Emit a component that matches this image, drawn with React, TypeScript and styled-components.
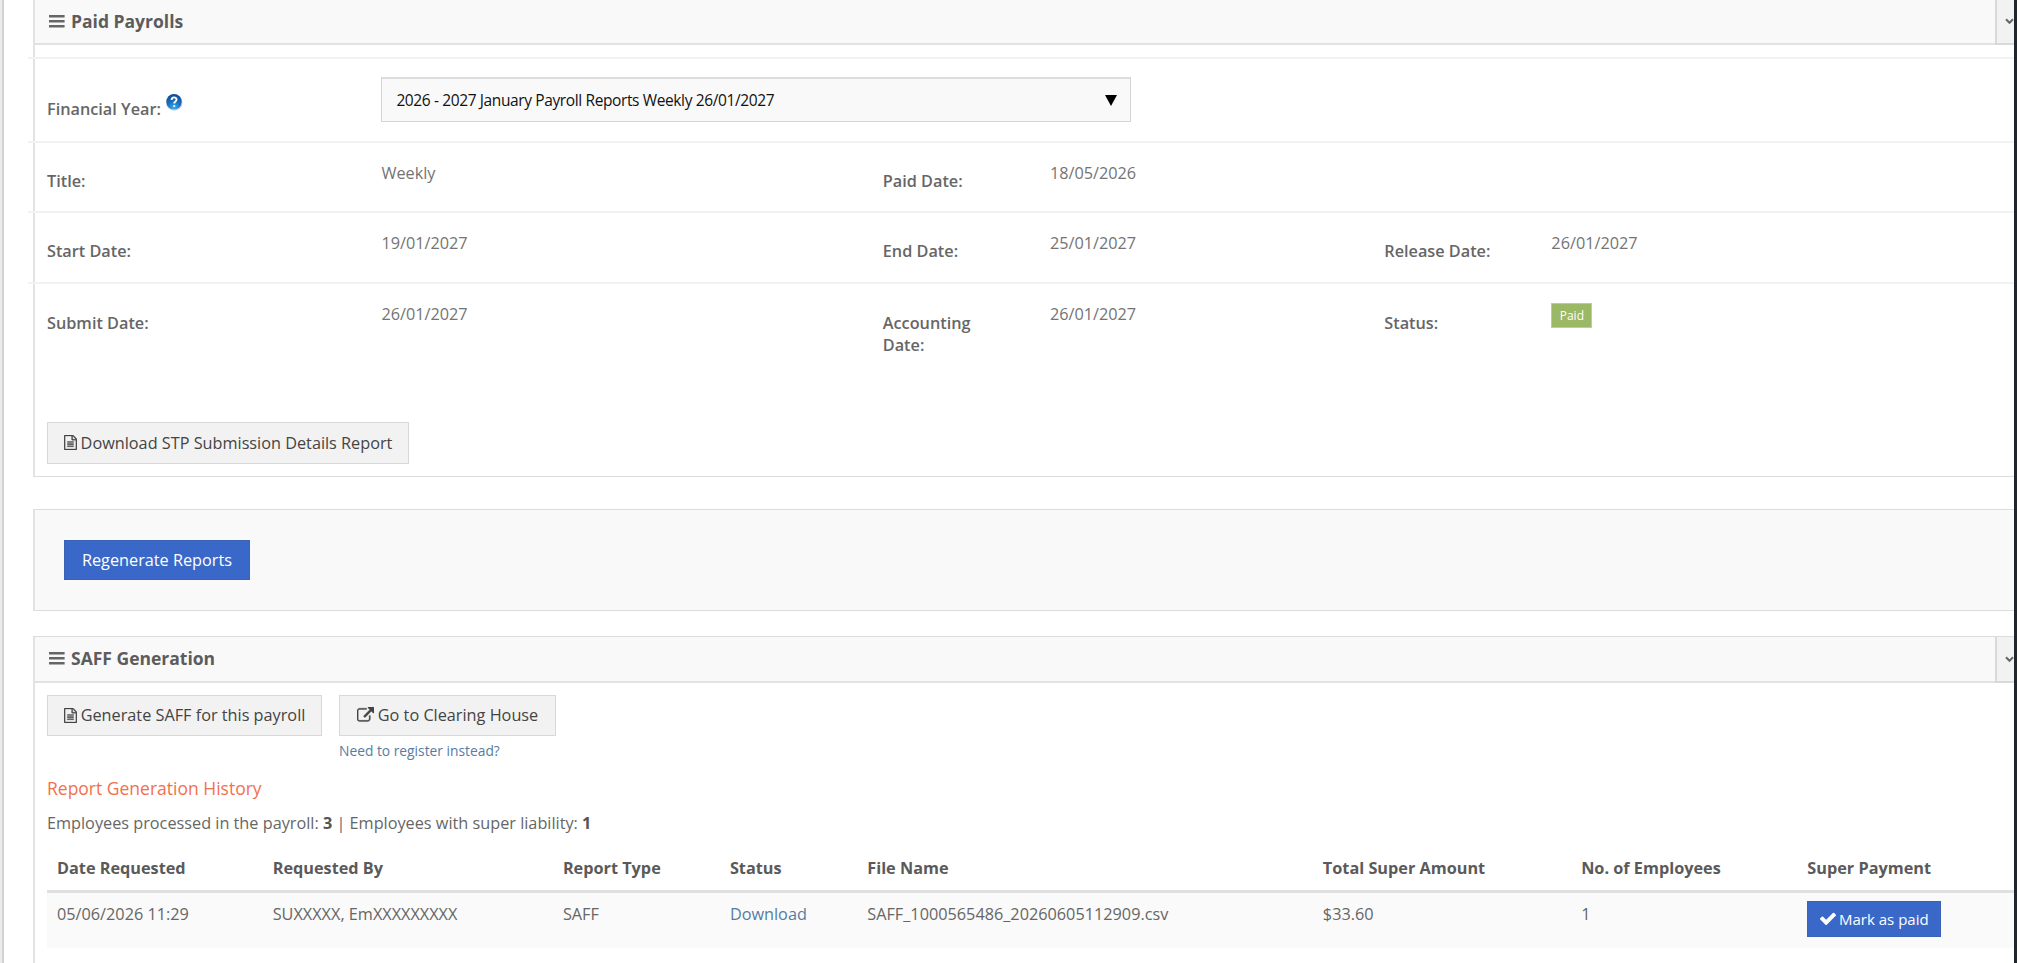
import React from "react";
import styled, { createGlobalStyle, css } from "styled-components";

const GlobalStyle = createGlobalStyle`
  * { box-sizing: border-box; }
  html, body { margin: 0; height: 100%; overflow: hidden; background: #fff; }
  body {
    font-family: "Open Sans", "Liberation Sans", sans-serif;
    font-size: 16.25px;
    line-height: 22px;
    color: #666;
  }
  #root { height: 100%; }
`;

const Screen = styled.div`
  display: flex;
  height: 963px;
  overflow: hidden;
`;

const LeftRail = styled.div`
  flex: none;
  width: 4px;
  background: #ebebeb;
  border-right: 2px solid #d2d2d2;
`;

const RightRail = styled.div`
  flex: none;
  width: 3px;
  background: #20262b;
`;

const Content = styled.main`
  flex: 1;
  min-width: 0;
  padding-left: 29px;
  overflow: hidden;
`;

const Panel = styled.section<{ $h: number; $top?: number; $open?: boolean }>`
  height: ${(p) => p.$h}px;
  margin-top: ${(p) => p.$top ?? 0}px;
  border: 1px solid #dcdcdc;
  border-left: 2px solid #e3e3e3;
  border-right: 0;
  ${(p) => p.$open && css`border-top: 0;`}
`;

const PanelHeader = styled.header<{ $h: number; $gap?: number }>`
  display: flex;
  height: ${(p) => p.$h}px;
  margin-bottom: ${(p) => p.$gap ?? 0}px;
  background: #f9f9f9;
  border-bottom: 2px solid #e2e2e2;
`;

const PanelTitle = styled.h2<{ $pad: number }>`
  flex: 1;
  display: flex;
  gap: 6px;
  margin: 0;
  padding: ${(p) => p.$pad}px 0 0 14px;
  font-size: 17.5px;
  line-height: 22px;
  font-weight: 700;
  color: #5c5c5c;
  svg { margin-top: 5px; }
`;

const Collapse = styled.button`
  width: 19px;
  height: calc(100% + 2px);
  padding: 0;
  border: 0;
  border-left: 2px solid #d9d9d9;
  border-bottom: 2px solid #d9d9d9;
  background: #f2f2f2;
  display: flex;
  align-items: center;
  justify-content: flex-end;
`;

const Row = styled.div<{ $h: number }>`
  display: grid;
  grid-template-columns: 334.4px 501.4px 167.1px 334.4px 167.1px 1fr;
  align-items: start;
  height: ${(p) => p.$h}px;
  margin-left: -7px;
  padding-left: 19px;
  border-top: 2px solid #f2f2f2;
`;

const Label = styled.div<{ $top?: number }>`
  padding: ${(p) => p.$top ?? 27}px 36px 0 0;
  font-weight: 600;
  display: flex;
  gap: 4px;
  svg { flex: none; margin-top: -5px; }
`;

const Value = styled.div`
  padding-top: 19px;
  color: #747474;
`;

const SelectBox = styled.div`
  display: flex;
  align-items: center;
  justify-content: space-between;
  width: 750px;
  height: 45px;
  margin-top: 18px;
  padding: 0 13px 0 14px;
  background: #f9f9f9;
  border: 1px solid #d5d5d5;
  border-top: 2px solid #dcdcdc;
  color: #111;
`;

const SelectText = styled.span`
  font-size: 15.5px;
  letter-spacing: -0.38px;
  white-space: nowrap;
`;

const Badge = styled.span`
  display: block;
  width: 41px;
  height: 25px;
  background: #9ab865;
  border: 1px solid #bccf98;
  color: #fff;
  font-size: 12px;
  line-height: 23px;
  text-align: center;
`;

const Button = styled.button<{ $w: number; $h: number; $primary?: boolean; $size?: number }>`
  display: flex;
  align-items: center;
  justify-content: center;
  gap: 4px;
  width: ${(p) => p.$w}px;
  height: ${(p) => p.$h}px;
  padding: 0 0 1px;
  border: 1px solid ${(p) => (p.$primary ? "#3a62b5" : "#d8d8d8")};
  background: ${(p) => (p.$primary ? "#3a68c8" : "#f2f2f2")};
  color: ${(p) => (p.$primary ? "#fff" : "#444")};
  font: inherit;
  font-size: ${(p) => p.$size ?? 16.25}px;
  white-space: nowrap;
`;

const RowButton = styled(Button)`
  margin-top: -1px;
  gap: 3px;
`;

const Shaded = styled.div`
  height: 100%;
  padding: 30px 0 0 29px;
  background: #f9f9f9;
`;

const StpRow = styled.div`
  padding-left: 12px;
`;

const Body = styled.div`
  padding: 12px 0 0 12px;
`;

const Actions = styled.div`
  display: flex;
  align-items: flex-start;
  gap: 17px;
`;

const Link = styled.a<{ $small?: boolean }>`
  color: #557ca3;
  ${(p) => p.$small && css`display: block; margin-top: 4px; margin-bottom: 1px; font-size: 13.8px; line-height: 22px;`}
`;

const History = styled.h3`
  margin: 13px 0 0;
  font-size: 17.5px;
  line-height: 24px;
  font-weight: 400;
  color: #f2704d;
`;

const Summary = styled.p`
  margin: 12px 0 0;
  b { color: #555; }
`;

const Table = styled.div`
  margin-top: 12px;
`;

const TableRow = styled.div<{ $head?: boolean }>`
  display: grid;
  grid-template-columns: 215.7px 290.2px 167px 137.4px 455.6px 258.3px 226.2px 1fr;
  align-items: start;
  padding-left: 10px;
  ${(p) =>
    p.$head
      ? css`height: 47px; padding-top: 10px; font-weight: 700; color: #5a5a5a; border-bottom: 3px solid #e0e0e0;`
      : css`height: 55px; padding-top: 9px; background: #fafafa;`}
`;

const Cell = styled.div`
  padding-top: 1px;
`;

const Bars = () => (
  <svg width="16" height="13" viewBox="0 0 16 13" fill="#666">
    <rect y="0" width="15.6" height="2.5" />
    <rect y="5" width="15.6" height="2.5" />
    <rect y="10" width="15.6" height="2.5" />
  </svg>
);

const Chevron = () => (
  <svg width="9" height="7" viewBox="0 0 9 7" fill="none" stroke="#666" strokeWidth="2">
    <path d="M1 1.2 4.5 4.8 8 1.2" />
  </svg>
);

const Help = () => (
  <svg width="18" height="18" viewBox="0 0 18 18">
    <defs>
      <radialGradient id="ball" cx="0.5" cy="0.9" r="0.85">
        <stop offset="0" stopColor="#35b0ee" />
        <stop offset="0.5" stopColor="#1b72c0" />
        <stop offset="1" stopColor="#104c98" />
      </radialGradient>
    </defs>
    <circle cx="9.3" cy="9.5" r="8.3" fill="#cdd1da" />
    <circle cx="9" cy="8.8" r="7.7" fill="url(#ball)" />
    <path d="M6.6 6.9c0-3.2 5-3.2 5-.3 0 1.9-2.4 1.8-2.4 3.8" fill="none" stroke="#fff" strokeWidth="1.8" />
    <circle cx="9.2" cy="13" r="1.1" fill="#fff" />
  </svg>
);

const FileIcon = () => (
  <svg width="13" height="15" viewBox="0 0 1536 1792" fill="currentColor" stroke="currentColor" strokeWidth="36">
    <path d="M1468 380q28 28 48 76t20 88v1152q0 40-28 68t-68 28h-1344q-40 0-68-28t-28-68v-1600q0-40 28-68t68-28h896q40 0 88 20t76 48zm-444-244v376h376q-10-29-22-41l-313-313q-12-12-41-22zm384 1528v-1024h-416q-40 0-68-28t-28-68v-416h-768v1536h1280zm-1024-864q0-14 9-23t23-9h704q14 0 23 9t9 23v64q0 14-9 23t-23 9h-704q-14 0-23-9t-9-23v-64zm736 224q14 0 23 9t9 23v64q0 14-9 23t-23 9h-704q-14 0-23-9t-9-23v-64q0-14 9-23t23-9h704zm0 256q14 0 23 9t9 23v64q0 14-9 23t-23 9h-704q-14 0-23-9t-9-23v-64q0-14 9-23t23-9h704z" />
  </svg>
);

const ExternalIcon = () => (
  <svg width="17" height="17" viewBox="0 0 1792 1792" fill="currentColor" stroke="currentColor" strokeWidth="36">
    <path d="M1408 928v320q0 119-84.5 203.5t-203.5 84.5h-832q-119 0-203.5-84.5t-84.5-203.5v-832q0-119 84.5-203.5t203.5-84.5h704q14 0 23 9t9 23v64q0 14-9 23t-23 9h-704q-66 0-113 47t-47 113v832q0 66 47 113t113 47h832q66 0 113-47t47-113v-320q0-14 9-23t23-9h64q14 0 23 9t9 23zm384-864v512q0 26-19 45t-45 19-45-19l-176-176-652 652q-10 10-23 10t-23-10l-114-114q-10-10-10-23t10-23l652-652-176-176q-19-19-19-45t19-45 45-19h512q26 0 45 19t19 45z" />
  </svg>
);

const CheckIcon = () => (
  <svg width="16" height="13" viewBox="121 270 1550 1252" fill="currentColor">
    <path d="M1671 566q0 40-28 68l-724 724-136 136q-28 28-68 28t-68-28l-136-136-362-362q-28-28-28-68t28-68l136-136q28-28 68-28t68 28l294 295 656-657q28-28 68-28t68 28l136 136q28 28 28 68z" />
  </svg>
);

const Caret = () => (
  <svg width="12" height="11" viewBox="0 0 12 11">
    <path d="M0 0h12L6 11z" fill="#000" />
  </svg>
);

export default function App() {
  return (
    <Screen>
      <GlobalStyle />
      <LeftRail />
      <Content>
        <Panel $h={477} $open>
          <PanelHeader $h={45} $gap={12}>
            <PanelTitle $pad={10}><Bars />Paid Payrolls</PanelTitle>
            <Collapse><Chevron /></Collapse>
          </PanelHeader>
          <Row $h={84}>
            <Label $top={39}>Financial Year: <Help /></Label>
            <SelectBox>
              <SelectText>2026 - 2027 January Payroll Reports Weekly 26/01/2027</SelectText>
              <Caret />
            </SelectBox>
          </Row>
          <Row $h={70}>
            <Label>Title:</Label><Value>Weekly</Value>
            <Label>Paid Date:</Label><Value>18/05/2026</Value>
          </Row>
          <Row $h={71}>
            <Label>Start Date:</Label><Value>19/01/2027</Value>
            <Label>End Date:</Label><Value>25/01/2027</Value>
            <Label>Release Date:</Label><Value>26/01/2027</Value>
          </Row>
          <Row $h={140}>
            <Label $top={28}>Submit Date:</Label><Value>26/01/2027</Value>
            <Label $top={28}>Accounting Date:</Label><Value>26/01/2027</Value>
            <Label $top={28}>Status:</Label><Value><Badge>Paid</Badge></Value>
          </Row>
          <StpRow>
            <Button $w={362} $h={42}><FileIcon />Download STP Submission Details Report</Button>
          </StpRow>
        </Panel>

        <Panel $h={102} $top={32}>
          <Shaded>
            <Button $primary $w={186} $h={40}>Regenerate Reports</Button>
          </Shaded>
        </Panel>

        <Panel $h={400} $top={25}>
          <PanelHeader $h={46}>
            <PanelTitle $pad={10}><Bars />SAFF Generation</PanelTitle>
            <Collapse><Chevron /></Collapse>
          </PanelHeader>
          <Body>
            <Actions>
              <Button $w={275} $h={41}><FileIcon />Generate SAFF for this payroll</Button>
              <div>
                <Button $w={217} $h={41}><ExternalIcon />Go to Clearing House</Button>
                <Link $small>Need to register instead?</Link>
              </div>
            </Actions>
            <History>Report Generation History</History>
            <Summary>
              Employees processed in the payroll: <b>3</b> | Employees with super liability: <b>1</b>
            </Summary>
            <Table>
              <TableRow $head>
                <Cell>Date Requested</Cell><Cell>Requested By</Cell><Cell>Report Type</Cell>
                <Cell>Status</Cell><Cell>File Name</Cell><Cell>Total Super Amount</Cell>
                <Cell>No. of Employees</Cell><Cell>Super Payment</Cell>
              </TableRow>
              <TableRow>
                <Cell>05/06/2026 11:29</Cell><Cell>SUXXXXX, EmXXXXXXXXX</Cell><Cell>SAFF</Cell>
                <Cell><Link>Download</Link></Cell><Cell>SAFF_1000565486_20260605112909.csv</Cell>
                <Cell>$33.60</Cell><Cell>1</Cell>
                <RowButton $primary $w={134} $h={36} $size={15}><CheckIcon />Mark as paid</RowButton>
              </TableRow>
            </Table>
          </Body>
        </Panel>
      </Content>
      <RightRail />
    </Screen>
  );
}
